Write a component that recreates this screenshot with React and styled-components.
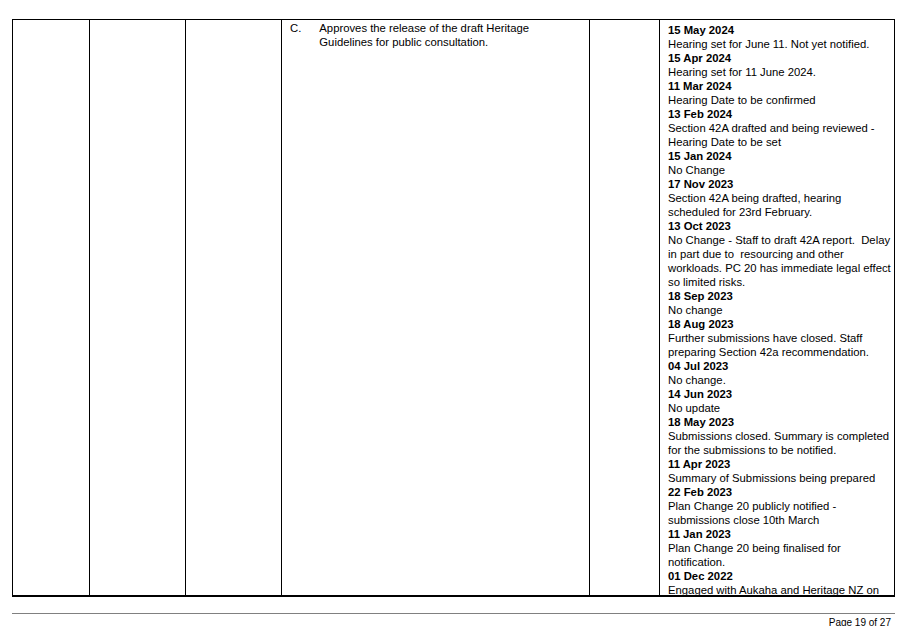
import React from 'react';
import styled, { createGlobalStyle } from 'styled-components';

const Global = createGlobalStyle`
  body { margin: 0; background: #fff; font-family: "Liberation Sans", Arial, sans-serif; color: #000; }
`;

const Page = styled.div`
  width: 907px;
  height: 626px;
  padding: 19px 12px 0 12px;
  box-sizing: border-box;
  overflow: hidden;
`;

const Table = styled.div`
  display: grid;
  grid-template-columns: 76px 96px 96px 308px 70px 1fr;
  height: 578px;
  border: 1px solid #000;
  border-bottom-width: 2px;
  box-sizing: border-box;
  overflow: hidden;
`;

const Cell = styled.div`
  border-left: ${p => (p.$first ? 'none' : '1px solid #000')};
  padding: 3px 8px 0 8px;
  font-size: 11.3px;
  line-height: 14px;
  white-space: pre-wrap;
  overflow: hidden;
`;

const Item = styled.div`
  display: flex;
  gap: 18px;
  margin-top: -2px;
`;

const DateLine = styled.div`
  font-weight: bold;
`;

const Footer = styled.div`
  margin-top: 16px;
  border-top: 1px solid #808080;
  padding-top: 3px;
  text-align: right;
  font-size: 10px;
  padding-right: 4px;
`;

const updates = [
  ['15 May 2024', 'Hearing set for June 11. Not yet notified.'],
  ['15 Apr 2024', 'Hearing set for 11 June 2024.'],
  ['11 Mar 2024', 'Hearing Date to be confirmed'],
  ['13 Feb 2024', 'Section 42A drafted and being reviewed - Hearing Date to be set'],
  ['15 Jan 2024', 'No Change'],
  ['17 Nov 2023', 'Section 42A being drafted, hearing scheduled for 23rd February.'],
  ['13 Oct 2023', 'No Change - Staff to draft 42A report.  Delay in part due to  resourcing and other workloads. PC 20 has immediate legal effect so limited risks.'],
  ['18 Sep 2023', 'No change'],
  ['18 Aug 2023', 'Further submissions have closed. Staff preparing Section 42a recommendation.'],
  ['04 Jul 2023', 'No change.'],
  ['14 Jun 2023', 'No update'],
  ['18 May 2023', 'Submissions closed. Summary is completed for the submissions to be notified.'],
  ['11 Apr 2023', 'Summary of Submissions being prepared'],
  ['22 Feb 2023', 'Plan Change 20 publicly notified - submissions close 10th March'],
  ['11 Jan 2023', 'Plan Change 20 being finalised for notification.'],
  ['01 Dec 2022', 'Engaged with Aukaha and Heritage NZ on'],
];

export default function App() {
  return (
    <Page>
      <Global />
      <Table>
        <Cell $first />
        <Cell />
        <Cell />
        <Cell>
          <Item>
            <span>C.</span>
            <span>Approves the release of the draft Heritage{'\n'}Guidelines for public consultation.</span>
          </Item>
        </Cell>
        <Cell />
        <Cell style={{ paddingRight: 2 }}>
          {updates.map(([d, t]) => (
            <div key={d}>
              <DateLine>{d}</DateLine>
              <div>{t}</div>
            </div>
          ))}
        </Cell>
      </Table>
      <Footer>Page 19 of 27</Footer>
    </Page>
  );
}
